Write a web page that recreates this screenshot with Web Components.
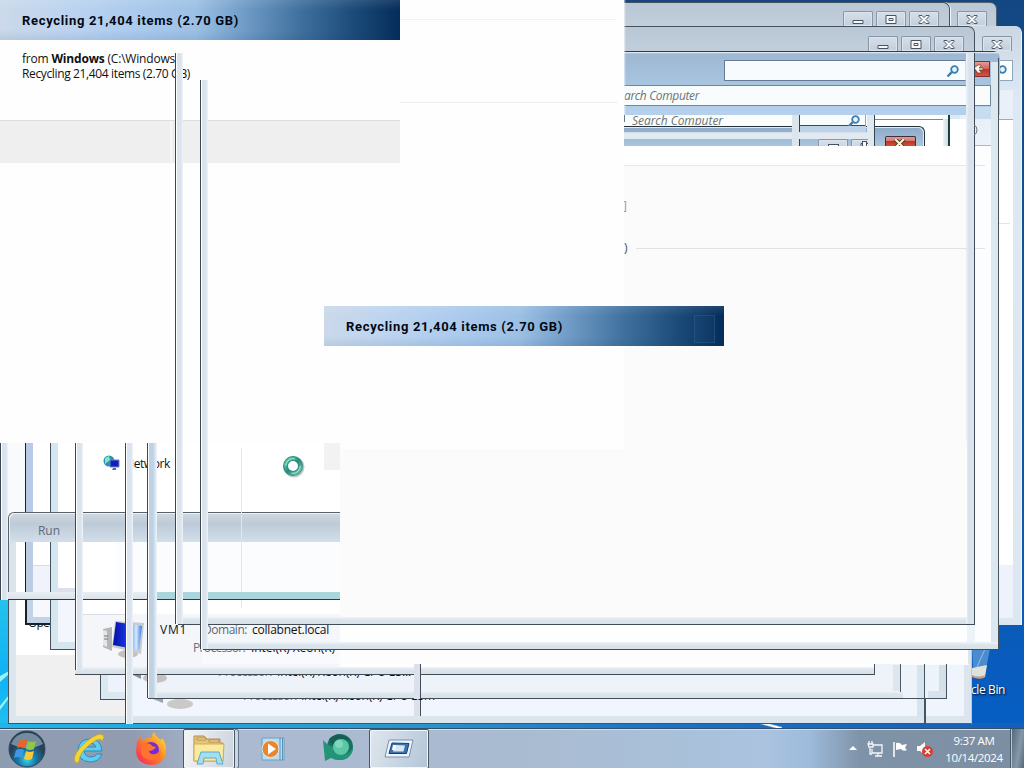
<!DOCTYPE html>
<html lang="en"><head><meta charset="utf-8"><title>Desktop</title>
<style>body{margin:0;overflow:hidden;width:1024px;height:768px}</style></head><body><desk-top></desk-top>
<script>
const make=(name,html,init)=>customElements.define(name,class extends HTMLElement{
 constructor(){super();this.attachShadow({mode:'open'}).innerHTML=html}
 connectedCallback(){init&&init(this)}
});
const place=e=>{const b=(e.getAttribute('box')||'').split(' ');['left','top','width','height'].forEach((k,i)=>{if(b[i])e.style[k]=b[i]+'px'});const f=e.getAttribute('fill');if(f)e.style.background=f};
/* fragment of a window: a filled area */
make('win-part',`<style>:host{position:absolute;display:block;box-sizing:border-box;overflow:hidden}</style><slot></slot>`,place);
/* vertical glass frame edge with dark outline on the left */
make('glass-edge',`<style>:host{position:absolute;display:block;box-sizing:border-box;border-left:1px solid #3c4652;background:linear-gradient(90deg,#fff 1px,var(--g,#dbe3ec) 1px,var(--g,#dbe3ec) 5px,#eff5fa)}</style>`,place);
/* horizontal glass frame edge with outline at the bottom */
make('glass-foot',`<style>:host{position:absolute;display:block;box-sizing:border-box;border-bottom:1px solid #424c56;background:linear-gradient(#edf4f9,#dce4eb 3px,#d9e1e8)}</style>`,place);
/* a line of text fitted to its advance width */
make('ui-text',`<style>:host{position:absolute;display:block;white-space:pre;font:12px/16px "Open Sans","Noto Sans",sans-serif;color:#111}span{display:inline-block}</style><span><slot></slot></span>`,e=>{place(e);e.style.height='';const w=parseFloat(e.style.width);if(w){const s=e.shadowRoot.querySelector('span');e.style.letterSpacing=(w-s.getBoundingClientRect().width)/e.textContent.length+'px'}});
const glyph={min:'<path d="M10 9.5h10v3H10z"/>',max:'<path d="M10 4.500h10v8H10zM13 7.500h4v2h-4z"/>',close:'<path d="M10 4.500h3l2 2 2-2h3v1l-3 3 3 3v1h-3l-2-2-2 2h-3v-1l3-3-3-3z"/>'};
make('caption-button',`<style>:host{position:absolute;display:block;box-sizing:border-box;width:30px;height:15px;border:1px solid #8795a5;border-bottom:0;border-radius:2px 2px 0 0;background:linear-gradient(#d5dfe9,#c2cedb);box-shadow:inset 0 0 0 1px #dce5ee}svg{display:block;margin:-1px}path{fill:#f4f8fc;stroke:#4b5561}</style><svg width="30" height="17"></svg>`,e=>{place(e);e.shadowRoot.querySelector('svg').innerHTML=glyph[e.getAttribute('kind')]});
make('title-strip',`<style>:host{position:absolute;display:flex;align-items:center;box-sizing:border-box;width:400px;height:40px;padding:1px 0 0 22px;font:bold 13px/16px Roboto,"Liberation Sans",sans-serif;color:#020814;letter-spacing:.67px;background:linear-gradient(180deg,#ffffff18,#0000 25%,#0000 75%,#003b7018),linear-gradient(90deg,#cbd9ea,#bbd3f0 18%,#a9c9ec 36%,#9cc0e4 49%,#709cc7 61%,#40719e 75%,#1d4c7a 88%,#052c5a);white-space:pre}</style><slot></slot>`,place);
make('search-lens',`<style>:host{position:absolute;display:block}svg{display:block}</style><svg width="14" height="14" viewBox="0 0 14 14" fill="none" stroke="#3f7fae"><circle cx="8.500" cy="5.500" r="3.300" fill="#e7f5fd" stroke-width="1.800"/><path d="M5.800 8.200 1.500 12.500" stroke-width="2.400"/></svg>`,place);
make('pc-icon',`<style>:host{position:absolute;display:block}svg{display:block}</style><svg width="44" height="40" viewBox="0 0 44 40"><defs><linearGradient id="s"><stop stop-color="#0411a0"/><stop offset=".4" stop-color="#1731dc"/><stop offset=".65" stop-color="#7aa9f8"/><stop offset=".8" stop-color="#d5eaff"/><stop offset="1" stop-color="#3477e6"/></linearGradient></defs><path d="m1 9 9-2v24l-9-4z" fill="#b4b7b8"/><path d="M1 10 5 11v16l-4-2z" fill="#e6e7e5"/><path d="M2 16h4M2 19h4" stroke="#6d7777"/><ellipse cx="26" cy="34" rx="10" ry="4" fill="#c3c1c0"/><path d="M24 27h7v7h-7z" fill="#d5d4d1"/><path d="m13 1 29 2-3 31-29-7z" fill="#c8cbd0"/><path d="m14 2 26 4-3 24-26-5z" fill="url(#s)"/></svg>`,place);

make('task-icon',`<style>:host{display:flex;align-items:center;justify-content:center;width:60px;height:40px;box-sizing:border-box}:host([active]){border:1px solid #4a5866;border-radius:2px;box-shadow:inset 0 0 0 1px #eef5fb;background:linear-gradient(110deg,#dfe7ef,#b3c5d6)}:host([stacked]){background:linear-gradient(100deg,#f6f4f4,#cad4de);width:52px}</style><slot></slot>`);
make('task-bar',`<style>
:host{position:absolute;left:0;top:728px;width:1024px;height:40px;display:flex;box-sizing:border-box;border-top:1px solid #33506a;box-shadow:inset 0 1px #d3e1ee;background:linear-gradient(90deg,#8e9cb2,#929cb1 13%,#acbad1 22%,#a9bbd0 50%,#aac3df 75%,#9dbbdc 79%,#7f93a8 84%,#7c8ea1);font:12px "Open Sans",sans-serif}
.tabs{display:flex;flex:1}.start{width:54px;display:flex;justify-content:center;align-items:center}.stack{width:4px;box-sizing:border-box;border:1px solid #65778a;border-left:0;border-radius:0 3px 3px 0;height:40px;background:#cbd8e4}.tray{display:flex;gap:8px;align-items:center;padding-right:7px;padding-top:1px}.clock{width:66px;text-align:center;color:#fff;line-height:17px;padding-top:3px;letter-spacing:-.35px;white-space:nowrap;font-size:11.500px}.show{width:14px;border-left:1px solid #42576a;box-shadow:inset 1px 0 #b8c7d3;background:linear-gradient(100deg,#506478,#8498a9 60%,#54677a);margin-left:3px;box-sizing:border-box}svg{display:block;flex:none}</style>
<div class="tabs"><div class="start"><svg width="38" height="38" viewBox="0 0 38 38"><defs><radialGradient id="o" cy=".8"><stop stop-color="#39d3ed"/><stop offset=".5" stop-color="#1879a8"/><stop offset="1" stop-color="#274158"/></radialGradient></defs><circle cx="19" cy="19" r="18" fill="url(#o)" stroke="#31485b"/><path d="M3 14a17 17 0 0 1 32 0q-15 8-32 0" fill="#c1d9e4" opacity=".5"/><path d="M11 11q4-3 8-1l-2 8q-4-2-8 0z" fill="#eb642a"/><path d="M20 11q4 2 8 0l-2 8q-4 2-8 0z" fill="#91c742"/><path d="M8 20q4-2 8 0l-2 8q-4-2-8 0z" fill="#3f99e1"/><path d="M18 21q4 2 8 0l-2 8q-4 2-8 0z" fill="#f9ca34"/></svg></div>
<task-icon style="width:70px"><svg width="32" height="34" viewBox="0 0 32 34"><path d="M29 19H11q1 6 7 6 4 0 6-3h5q-3 8-12 8Q5 29 5 18 6 7 17 7t12 12M11 15h12q-1-4-6-4t-6 4" fill="#61cbf0" stroke="#298ebd"/><path d="M2 30Q-1 22 13 10 25 0 30 3q2 2-1 6-1-4-9 1Q6 20 6 29q-1 3-4 1" fill="#f4d536" stroke="#c7a520" stroke-width=".7"/></svg></task-icon>
<task-icon style="width:53px"><svg width="32" height="34" viewBox="0 0 32 34"><defs><linearGradient id="f" x1="1" x2="0" y2="1"><stop stop-color="#ffe945"/><stop offset=".45" stop-color="#ff8a22"/><stop offset="1" stop-color="#f71b62"/></linearGradient></defs><path d="M2 9 6 4l1 5q5-4 10-3 0-4 2-6 3 6 7 8l1-2q5 6 4 13-1 14-15 14Q2 32 1 20z" fill="url(#f)"/><circle cx="16" cy="18" r="8" fill="#722ed4"/><path d="M8 12q7-2 9 2l4 1q-3 4-7 4 1 4 6 3 5-1 5-6 3 12-9 12Q6 27 6 19z" fill="#ff732e"/></svg></task-icon>
<div style="width:6px"></div><task-icon active stacked><svg width="34" height="34" viewBox="0 0 34 34"><path d="M2 4h10l3 3h13v4h3v18H2z" fill="#e3c778" stroke="#b08f4a"/><path d="M5 6h9v2H5zM17 8h10v2H17z" fill="#e3f4e5" stroke="#c58140"/><path d="M2 12h30l-1 17H2z" fill="#f9e9a1" stroke="#d1ad55"/><path d="M9 20h18l4 12h-6l-1-6H12l-1 6H5z" fill="#a5ddf0" stroke="#5baccc"/></svg></task-icon><div class="stack"></div>
<task-icon style="width:68px"><svg width="28" height="28" viewBox="0 0 28 28"><path d="M3 3h22v22H3z" fill="#bbdcef" stroke="#6d9fbf"/><path d="M21 3v22M23.500 3v22" stroke="#5591b9"/><circle cx="11.500" cy="14" r="8.500" fill="#e9862d" stroke="#dfe8ee"/><path d="m9 8.500 8 5.500-8 5.500z" fill="#fff"/></svg></task-icon>
<task-icon style="width:62px"><svg width="34" height="32" viewBox="0 0 34 32"><circle cx="19" cy="14" r="13" fill="#17735f"/><path d="M8 6q8-8 18-2l4 4q-8-3-13 0l-6 4z" fill="#175f56"/><path d="M2 7q5 6 11 7 0 8 8 8 8-1 11-8-1 13-14 13-5 0-8-2l-6 3z" fill="#249478"/><circle cx="20" cy="14" r="8" fill="#5cc7a7"/><circle cx="18" cy="11" r="4" fill="#8bdfc5" opacity=".7"/></svg></task-icon>
<task-icon active><svg width="30" height="20" viewBox="0 0 30 20"><path d="M5 1h24l-4 17H1z" fill="#edf4fc" stroke="#7891b2"/><path d="m8 4 17 .5-2.500 10H5z" fill="#3d72b2" stroke="#183f75"/><path d="m11 6 10 .5-1.500 6H9z" fill="#d9e6f6"/><path d="M9 6h3l-1 5H8z" fill="#fff"/></svg></task-icon></div>
<div class="tray"><svg width="12" height="8"><path d="m6 1 4 4H2z" fill="#fff"/></svg><svg width="17" height="17" fill="none" stroke="#f3f7fa" stroke-width="1.300"><path d="M6 4h9v8H5V8M8 15h7M11 12v3M1 3h5v3H2zM2 0v3M5 0v3M3 7v6h2"/></svg><svg width="16" height="17"><path d="M2 1v15" stroke="#fff" stroke-width="1.500"/><path d="M4 2q4-1 6 2l5-1-2 4 2 2q-4 2-6-1L4 9z" fill="#fff"/></svg><svg width="18" height="18"><path d="M1 6h3l5-4v13l-5-4H1z" fill="#f8f9fa"/><circle cx="11.500" cy="11.500" r="5.500" fill="#da3d34"/><path d="m9 9 5 5m0-5-5 5" stroke="#fff" stroke-width="1.500"/></svg></div><div class="clock">9:37 AM<br>10/14/2024</div><div class="show"></div>`);

const P=(b,f,s='')=>`<win-part box="${b}" fill="${f}" style="${s}"></win-part>`;
const V=(b,s='')=>`<glass-edge box="${b}" style="${s}"></glass-edge>`;
const H=b=>`<glass-foot box="${b}"></glass-foot>`;
const T=(b,t,s='')=>`<ui-text box="${b}" style="${s}">${t}</ui-text>`;
const C=(x,y,k)=>`<caption-button box="${x} ${y} 30 15" kind="${k}"></caption-button>`;
const bar='linear-gradient(#b9c7d6,#c1ceda 40%,#d1dce6)', frame='border:1px solid #46515e;border-left:0;';
/* a text line with only part of its height left on screen; the text moves up by `dy` */
const Clip=(b,dy,w,t,s='')=>`<win-part box="${b}">${T(`0 ${dy} ${w}`,t,s)}</win-part>`;
make('desk-top',`<style>:host{position:relative;display:block;width:1024px;height:768px;overflow:hidden;background:linear-gradient(#124783,#12518f 25%,#0e58b0 70%,#045fc7)}svg{display:block}</style>`+
/* wallpaper */
P('0 590 20 140','linear-gradient(#28c4ea,#10b2f5 60%,#21bff0)')+P('0 723 1024 5','linear-gradient(90deg,#20b5e7,#2996cc 40%,#1c71c6 65%,#1260bb)')+
`<win-part box="0 660 9 55"><svg width="9" height="55"><path d="M0 16 9 11v3l-9 8zM0 46l9-11v3L0 50z" fill="#9bf1f5"/></svg></win-part>`+
P('760 724 22 4','linear-gradient(15deg,#0000 35%,#fff 50%,#fff 60%,#0000 75%)')+
/* back windows at the right */
P('600 2 397 60',bar,'border:1px solid #56616d;border-radius:0 7px 0 0')+C(957,11,'close')+
P('600 2 350 60',bar,frame+'border-radius:0 7px 0 0;box-shadow:1px 0 #eff5fa')+C(843,11,'min')+C(876,11,'max')+C(909,11,'close')+
P('600 26 422 599','linear-gradient(#cbd7e3,#dce8f3 70px,#dce7f2)','border-radius:0 7px 0 0;border-right:1px solid #eff6fb')+C(982,36,'close')+P('960 60 53 21','#fcfdfe','border:1px solid #8fa6bd')+'<search-lens box="994 64"></search-lens>'+P('960 90 53 528','linear-gradient(#e9f0f8 29px,#9eacbb 29px,#9eacbb 30px,#fff 30px,#fff 475px,#eef3fb 475px)')+P('998 223 12 1','#e0e4e9')+
P('600 26 375 60',bar,frame+'border-radius:0 7px 0 0')+C(868,36,'min')+C(901,36,'max')+C(934,36,'close')+
/* recycle bin */
`<win-part box="970 646 22 34"><svg width="22" height="34"><path d="m2 1 18 2-4 20q-8 4-13-2z" fill="#9bc7e6" opacity=".45"/><path d="m2 22 15-3-2 12q-8 3-13-1z" fill="#dfe1db"/><path d="M2 29q7 3 13 0l-1 3q-6 2-12-1z" fill="#c79c86"/><path d="m10 0 5 3-8 18" stroke="#dff3ff" fill="none" opacity=".5"/></svg></win-part>`+
T('971 682 34','cle Bin','color:#fff;text-shadow:1px 1px 2px #000')+
/* lower cascade */
P('8 590 130 134','#f0f0f0','border:1px solid #43515e;box-shadow:inset 7px -7px #dce6ed')+P('16 594 60 61','#fff')+Clip('28 623 24 8',-8,30,'Open:','text-decoration:underline')+
P('125 640 847 84','#f0f5fd','border:1px solid #53606c;border-right-color:#bdc9d4;box-shadow:inset -7px -7px #dce5ed')+
P('100 640 801 60','#eef3fb','border:1px solid #43505d;box-shadow:inset 7px -7px #dce8f1')+
P('147 640 800 59','#edf3fa','border:1px solid #43505d;box-shadow:inset -7px -7px #d8e2ec')+
P('25 440 130 185','#f6f8fd','border:2px solid #17202b;border-right:0;box-shadow:inset 6px -6px #c1d3e5')+
P('50 440 130 210','#f3f7fd','border:1px solid #46535f;box-shadow:inset 7px -7px #d6e6ef')+
P('0 440 25 160','#f8fafc')+P('32 440 18 124','#fff')+P('58 440 17 149','#fff')+
P('126 675 800 49','#f1f5fd','border-bottom:1px solid #485561;border-right:1px solid #485561;box-shadow:inset 7px -7px #dce5ec')+P('148 664 780 35','#eef3fa')+H('148 691 755 8')+
P('75 440 800 235','#f4f6fa','border:1px solid #46515c;box-shadow:inset 7px -7px #dce4eb')+P('83 440 783 174','#fff')+
P('340 664 535 4','#fdfeff')+H('75 667 800 8')+P('874 664 1 11','#46515c')+
P('901 664 68 1','#f9fbfd')+P('900 650 1 42','#4c5864')+P('924 650 1 74','#46525d')+P('946 650 1 49','#46525d')+P('893 665 7 26','#dde5ed')+P('917 665 7 52','#d4e5ef')+P('939 665 7 26','#d4dfe8')+P('903 698 44 1','#46525d')+P('414 664 6 52','#dde0ea')+P('420 664 1 52','#434d59')+H('421 667 453 8')+H('421 691 479 8')+
P('202 650 766 14','#fdfdfe')+P('202 650 138 14','#f9fafd')+
'<pc-icon box="102 620"></pc-icon>'+
`<win-part box="133 675 36 9"><svg width="36" height="9"><ellipse cx="22" cy="3" rx="12" ry="5" fill="#c3c1c1"/><path d="M0 0h8v4z" fill="#8b9097"/></svg></win-part><win-part box="152 699 44 11"><svg width="44" height="11"><ellipse cx="28" cy="5" rx="13" ry="5" fill="#cbc9c6"/><path d="M1 0h10v4z" fill="#9da2a9"/></svg></win-part>`+
T('160 622 27','VM1')+T('203 622 44','Domain:','color:#596878')+T('252 622 77','collabnet.local')+
Clip('193 650 142 6',-10,52,'Processor:','color:#657180')+Clip('251 650 90 5',-10,84,'Intel(R) Xeon(R)')+P('193 642 8 8','#f4f6fa')+Clip('193 642 8 8',-2,52,'Processor:','color:#657180')+
Clip('218 675 60 4',-11,54,'Processor:','color:#657180')+Clip('277 675 136 4',-11,134,'Intel(R) Xeon(R) CPU E5...')+
Clip('243 699 60 5',-11,54,'Processor:','color:#657180')+Clip('301 699 136 5',-11,134,'Intel(R) Xeon(R) CPU E5m')+
/* network item */
`<win-part box="103 455 18 17"><svg width="18" height="17"><circle cx="6" cy="6" r="5.500" fill="#2298ae"/><path d="m2 3 4-2 1 4-5 4z" fill="#8be3c5"/><path d="M7 5h9v7H7z" fill="#101fb5" stroke="#6c83d0"/><path d="M10 13h3v2h-4z" fill="#5269a9"/></svg></win-part>`+T('125 456 45','Network')+
/* Run dialog */
P('8 512 340 88','#fbfcfe','border:1px solid #56616b;border-right:0;border-radius:6px 0 0 0')+P('9 513 331 29','linear-gradient(#cfd7df,#bdcad7 35%,#d2dfeb)','border-top:1px solid #edf2f8;border-left:1px solid #edf2f8;border-radius:6px 0 0 0')+P('9 542 7 58','#dce4ea')+T('38 523 22','Run','color:#5d6b7a')+
P('16 542 100 50','#fff')+P('33 565 18 27','#f0f3fb','border-top:1px solid #d9dce8')+P('33 542 18 23','#fff')+P('25 542 8 50','linear-gradient(90deg,#18202b 1px,#bccce2 1px)')+P('50 542 8 50','linear-gradient(90deg,#46515b 1px,#d4e6ef 1px)')+P('58 588 17 4','#dbe1eb')+
P('25 443 8 69','linear-gradient(90deg,#18202b 1px,#b8cae7 1px)')+P('50 443 8 69','linear-gradient(90deg,#46515b 1px,#d4e6ef 1px)')+
P('241 448 1 160','#e3e5eb')+P('0 592 340 8','linear-gradient(#e9eff4,#dae2e9)','border-bottom:1px solid #293a42')+P('157 592 183 8','#aad5da','border-bottom:1px solid #293d41')+
V('0 440 8 160')+V('75 440 8 230')+V('125 440 8 284')+V('147 440 10 258','--g:#bed2e4')+
P('83 614 42 1','#d9dee6')+
/* front empty window */
P('340 146 627 472','linear-gradient(#fff 19px,#e8e9eb 19px,#e8e9eb 20px,#fbfbfb 20px)')+P('967 62 32 588','#edf3f9')+P('340 624 627 18','#fdfefe')+P('208 625 132 17','#fdfefe00')+H('203 642 796 8')+H('178 617 796 8')+
P('624 51 376 64','linear-gradient(#303e4a 1px,#edf5fc 1px,#9eb8d3 3px,#a9c4df 33px,#b4d0ec 60px)','border-radius:0 7px 0 0')+
P('724 60 242 21','#f7fbfe','border:1px solid #667b93;border-right-color:#d2dfea')+'<search-lens box="946 64"></search-lens>'+
P('620 85 371 21','#f8fcfc','border:1px solid #70879a')+Clip('624 88 100 17',0,75,'arch Computer','font-style:italic;color:#6b7475')+
P('624 115 325 31','#fff')+P('624 115 168 11','#fbfdfd')+P('624 115 1 7','#62788c')+Clip('632 115 95 10',-2,91,'Search Computer','font-style:italic;color:#6b7475')+
P('624 126 301 20','linear-gradient(#8eaac8,#abc5e0)','border-top:1px solid #25323e;border-right:1px solid #25323e;border-radius:0 6px 0 0;box-shadow:inset -1px 1px #dcebf7')+
P('800 115 66 17','linear-gradient(#f9fcfd 10px,#36495a 10px,#36495a 11px,#bed3e9 11px)')+'<search-lens box="847 114"></search-lens>'+P('847 126 14 6','#bed3e9')+P('799 115 1 18','#344450')+P('865 115 1 11','#8ba6bd')+
P('624 132 250 7','#e2e9f0','border-top:1px solid #cfdeeb')+P('792 115 7 31','#dce4ec')+P('867 115 7 31','#e1e9f0')+P('874 115 1 31','#344450')+P('799 139 1 7','#344450')+
`<win-part box="818 139 50 7">${C(0,0,'min')}${C(33,0,'max')}</win-part>`+P('828 144 11 2','#f5f8fc','border:1px solid #445366;border-bottom:0')+P('862 141 5 5','#f5f8fc','border:1px solid #445366;border-bottom:0')+
P('885 136 31 10','linear-gradient(#df9b96,#d27369 50%,#bc3725 50%,#cf5037)','border:1px solid #3d303c;border-bottom:0;border-radius:2px 2px 0 0')+`<win-part box="892 139 15 7"><svg width="15" height="12"><path d="m3 0 9 9m0-9-9 9" stroke="#54402e" stroke-width="4"/><path d="m3 0 9 9m0-9-9 9" stroke="#fff4cd" stroke-width="2"/></svg></win-part>`+
P('875 119 68 1','#7b8998')+P('943 119 5 27','linear-gradient(90deg,#edf2f5,#ccdde5)')+P('948 115 2 31','#173f40')+P('950 119 18 27','#fff')+
P('966 53 8 571','linear-gradient(90deg,#eaf2f9,#d9e1eb 3px,#dce5ee)')+P('974 53 1 572','#3d4a55')+P('975 107 16 39','linear-gradient(#c7dced 12px,#e8eff7 12px,#eef3fa)')+P('975 145 16 1','#adb8c4')+P('975 146 16 496','#fcfdff')+P('991 62 8 580','#dce8f0')+P('998 58 1 592','#48535e')+
P('975 61 15 16','linear-gradient(#e69d91,#d46157 50%,#b63428 50%,#d05543)','border:1px solid #80302e;border-left:0')+`<win-part box="975 63 9 12"><svg width="9" height="12"><path d="M-1 5 3 2h3v1L4 5h4v2H4l2 2v1H3z" fill="#fff8e6" stroke="#64433e" stroke-width=".7"/></svg></win-part>`+
`<win-part box="973 122 5 17"><svg width="5" height="17"><path d="M1 3q3 1 3 5t-3 5" fill="none" stroke="#657584"/></svg></win-part>`+
T('623 198',']','color:#999')+T('624 240',')','color:#455060')+P('636 248 331 1','#e0e2e5')+P('975 248 10 1','#e0e2e5')+P('975 165 10 1','#e0e2e5')+
P('340 441 627 176','#fbfbfb')+
/* blank area, upper left */
P('0 0 624 443','#fefefe')+P('340 443 284 6','#fefefe')+P('619 0 7 115','linear-gradient(90deg,#fefefe 4px,#fefefe00)')+P('400 19 216 1','#f1f1f3')+P('400 102 218 1','#f0eeee')+
P('324 443 16 27','#f2f2f2')+P('0 120 400 43','#efefef','border-top:1px solid #dcdcdc')+P('170 121 2 41','#f6f6f6')+
T('22 50.5','from <b>Windows</b> (C:\\Windows)','letter-spacing:-.19px')+T('22 65.5 168','Recycling 21,404 items (2.70 GB)')+
V('175 53 8 571')+V('200 80 8 569')+
`<win-part box="282 455 24 23"><svg width="24" height="23"><defs><linearGradient id="r" x2="1" y2="1"><stop stop-color="#63d1b4"/><stop offset=".5" stop-color="#268d7d"/><stop offset="1" stop-color="#72cbb4"/></linearGradient></defs><circle cx="12" cy="12" r="8.500" fill="none" stroke="#c5cac8" stroke-width="4"/><circle cx="11" cy="11" r="7.500" fill="#fff" stroke="#2b8376" stroke-width="5"/><circle cx="11" cy="11" r="7.500" fill="none" stroke="url(#r)" stroke-width="3.500"/><circle cx="11" cy="11" r="7.300" fill="none" stroke="#a6ead9" stroke-width="1" stroke-dasharray="13 10"/></svg></win-part>`+
'<title-strip box="0 0"><span>Recycling 21,404 items (2.70 GB)</span></title-strip><title-strip box="324 306"><span>Recycling 21,404 items (2.70 GB)</span></title-strip>'+P('694 315 21 28','#2b648b22','border:1px solid #3976954d')+
'<task-bar></task-bar>');
</script></body></html>
